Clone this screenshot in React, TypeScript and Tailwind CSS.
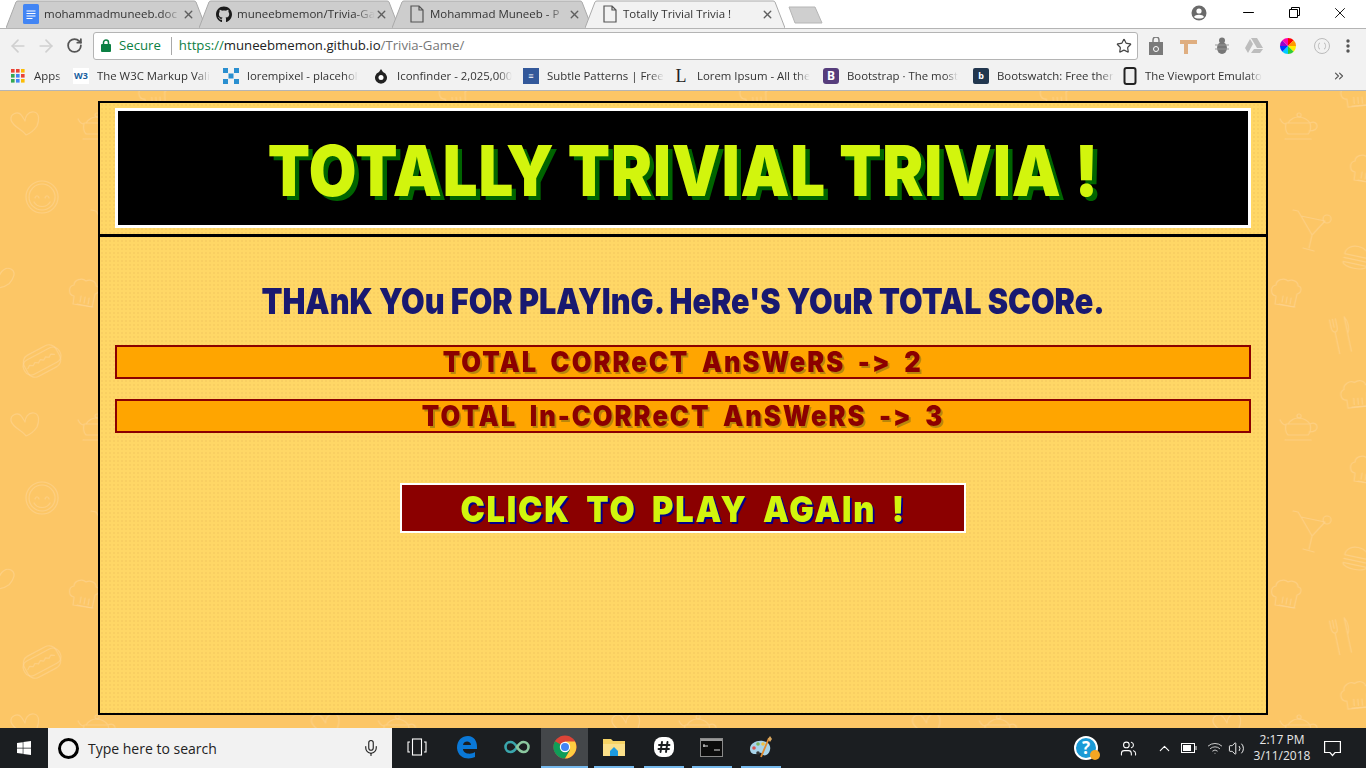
import React from "react";
import { ArrowLeft, ArrowRight, RotateCw, Star, X, Minus, ChevronUp, Users, Mic, ChevronsRight, Volume2, Wifi } from "lucide-react";
import { FaGithub, FaWindows } from "react-icons/fa";

const ui = "font-['Open_Sans','Noto_Sans',sans-serif]";
const display = "font-['Inter','Liberation_Sans',sans-serif] font-black";

const DocIcon = () => (
  <svg width="16" height="20" viewBox="0 0 16 20">
    <rect width="16" height="20" rx="1.5" fill="#4285f4" />
    <path d="M3.5 7h9M3.5 9.5h9M3.5 12h9M3.5 14.5h6" stroke="#fff" strokeWidth="1.2" />
  </svg>
);

const PageIcon = () => (
  <svg width="14" height="18" viewBox="0 0 14 18" fill="none" stroke="#555" strokeWidth="1.2">
    <path d="M1 1h8l4 4v12H1zM9 1v4h4" />
  </svg>
);

const Tab = ({ title, icon, active }: { title: string; icon: React.ReactNode; active?: boolean }) => (
  <div className="relative -mr-[7px] flex h-[28px] w-[200px] shrink-0 items-center pl-[17px] pr-[11px]" style={{ zIndex: active ? 5 : 1 }}>
    <svg className="absolute inset-0 h-full w-full" viewBox="0 0 200 28" preserveAspectRatio="none">
      <path d="M0 28 L10 2 Q10.5 1 12 1 L188 1 Q189.500 1 190 2 L200 28" fill={active ? "#f2f2f2" : "#cdcdcd"} stroke="#a9a9a9" />
    </svg>
    <div className="relative flex w-[16px] shrink-0 justify-center">{icon}</div>
    <span className={`relative ml-[5px] flex-1 whitespace-nowrap text-[11.5px] text-[#333] [mask-image:linear-gradient(to_right,black_85%,transparent)] ${ui}`}>
      {title}
    </span>
    <X size={13} strokeWidth={2.6} className="relative shrink-0 text-[#5f5f5f]" />
  </div>
);

const Mark = ({ className, children }: { className: string; children?: React.ReactNode }) => (
  <div className={`flex h-[16px] w-[16px] shrink-0 items-center justify-center text-[9px] font-bold text-white ${className}`}>{children}</div>
);

const bookmarks: { title: string; width: number; icon: React.ReactNode }[] = [
  { title: "Apps", width: 63, icon: (
    <svg width="16" height="16" viewBox="0 0 16 16">
      {["#ea4335", "#ea4335", "#fbbc05", "#34a853", "#4285f4", "#ea4335", "#34a853", "#4285f4", "#fbbc05"].map((c, i) => (
        <rect key={i} x={1 + (i % 3) * 5} y={1 + Math.floor(i / 3) * 5} width="3.6" height="3.6" fill={c} />
      ))}
    </svg>
  ) },
  { title: "The W3C Markup Vali", width: 150, icon: <Mark className="bg-white !text-[#1a5fa0]">W3</Mark> },
  { title: "lorempixel - placehol", width: 150, icon: (
    <svg width="16" height="16" viewBox="0 0 16 16" fill="#2a8fd0">
      <path d="M0 0h5v5H0zM11 0h5v5h-5zM5.500 5.500h5v5h-5zM0 11h5v5H0zM11 11h5v5h-5z" />
    </svg>
  ) },
  { title: "Iconfinder - 2,025,000", width: 150, icon: (
    <svg width="16" height="16" viewBox="0 0 16 16">
      <path d="M8 1l2 3a6 6 0 1 1-4 0z" fill="#222" />
      <circle cx="8" cy="9.500" r="2.500" fill="#fff" />
    </svg>
  ) },
  { title: "Subtle Patterns | Free", width: 150, icon: <Mark className="bg-[#33589a]">≡</Mark> },
  { title: "Lorem Ipsum - All the", width: 150, icon: <span className="w-[16px] text-center font-['Liberation_Serif',serif] text-[18px] leading-[16px] text-[#222]">L</span> },
  { title: "Bootstrap · The most", width: 150, icon: <Mark className="rounded-[3px] bg-[#563d7c] !text-[12px]">B</Mark> },
  { title: "Bootswatch: Free ther", width: 150, icon: <Mark className="rounded-[2px] bg-[#22374f]">b</Mark> },
  { title: "The Viewport Emulato", width: 150, icon: (
    <svg width="14" height="18" viewBox="0 0 14 18"><rect x="1.500" y="1" width="11" height="16" rx="2" fill="#eee" stroke="#222" strokeWidth="2" /></svg>
  ) },
];

const Doodles = () => (
  <svg className="absolute inset-0 h-full w-full" xmlns="http://www.w3.org/2000/svg">
    <defs>
      <g id="heart"><path d="M0 9C-4 3-13 1-15-6c-1-6 7-10 11-4 1 2 2 3 3 5 0-4 3-10 9-9 6 1 5 9 3 14-2 3-6 7-11 9z" /></g>
      <g id="chef">
        <path d="M-9 6C-15 5-15-4-9-5c0-5 8-8 12-4 4-2 10 0 10 5 4 0 4 7-1 8l-3 13-19-3z" />
        <path d="M-6 14l16 3M-2 6l-1 6M2 7l-1 6M6 8l-1 6" />
      </g>
      <pattern id="tile" width="300.500" height="301" patternUnits="userSpaceOnUse">
        <g fill="none" stroke="#fdd694" strokeOpacity="0.6" strokeWidth="1.200" strokeLinecap="round" strokeLinejoin="round">
          <use href="#heart" x="26" y="35" />
          <use href="#heart" x="-1" y="189" transform="rotate(20 0 189)" />
          <use href="#heart" x="299.500" y="189" transform="rotate(20 300 189)" />
          <g transform="translate(97 37)">
            <path d="M-13-5h24c1 4 1 8-2 11h-20c-3-3-3-7-2-11zM-11-5c2-4 7-6 10-6 5 0 9 2 12 6M-13-4c-3 0-5-3-6-5M11-5c4-2 7 0 7 3s-3 5-8 5M-14 11h26" />
            <circle cx="0" cy="-13" r="2" />
          </g>
          <g transform="translate(42 106)">
            <circle r="16" />
            <circle r="13" />
            <path d="M-7 1c1-3 3-3 4 0M3 1c1-3 3-3 4 0M-8 5c3 6 13 6 16 0" />
          </g>
          <g transform="translate(110 135)">
            <path d="M-11-10l24 5-13 14zM0 9l-3 13M-9 22l11 3M-11-10l-3-5-5-1" />
            <circle cx="15" cy="-7" r="4" />
          </g>
          <use href="#chef" x="83" y="199" />
          <g transform="translate(42 270) rotate(-28)">
            <rect x="-20" y="-8" width="40" height="16" rx="7" />
            <rect x="-18" y="-12" width="36" height="24" rx="8" />
            <path d="M-16 0l3-2 3 2 3-2 3 2 3-2 3 2 3-2 3 2 3-2 3 2" />
          </g>
          <g transform="translate(139 245) rotate(-12)">
            <path d="M-8-18v8c0 3 2 5 3 5v22M-5-18v8M-2-18v8c0 3-1 5-3 5M7-18c3 5 3 13 0 17v18M7-18v17" />
          </g>
          <g transform="translate(154 167) rotate(12)">
            <path d="M-12-2c0-13 24-13 24 0zM-12 2h24M-12 6c0 6 24 6 24 0z" />
          </g>
          <use href="#chef" x="152" y="0" transform="rotate(-15 152 0)" />
          <use href="#chef" x="152" y="301" transform="rotate(-15 152 301)" />
          <use href="#chef" x="162" y="75" />
        </g>
      </pattern>
    </defs>
    <rect width="100%" height="100%" fill="url(#tile)" />
  </svg>
);

const ScoreRow = ({ children }: { children: React.ReactNode }) => (
  <div className={`flex h-[34px] items-center justify-center border-2 border-[#8b0000] bg-[#ffa500] text-[28px] tracking-[2.2px] text-[#8b0000] [text-shadow:2px_2px_0_#b8860b] [word-spacing:6px] ${display}`}>
    <span className="inline-block scale-x-[0.91] whitespace-nowrap">{children}</span>
  </div>
);

const dotted = "bg-[#ffd766] bg-[radial-gradient(#f9cf62_1px,transparent_1.2px)] bg-[length:4px_4px]";

const ChromeLogo = () => (
  <svg width="24" height="24" viewBox="0 0 24 24">
    <circle cx="12" cy="12" r="11.500" fill="#db4437" />
    <path d="M12 12L2 6.200A11.500 11.500 0 0 0 12 23.500l5.700-10z" fill="#0f9d58" />
    <path d="M12 6.500h10A11.500 11.500 0 0 1 12 23.500l5-8.500z" fill="#ffcd40" />
    <circle cx="12" cy="12" r="5.200" fill="#fff" />
    <circle cx="12" cy="12" r="4" fill="#4285f4" />
  </svg>
);

const taskIcons: { width: number; active?: boolean; bar?: boolean; icon: React.ReactNode }[] = [
  { width: 50, icon: (
    <svg width="22" height="22" viewBox="0 0 22 22" fill="none" stroke="#fff" strokeWidth="1.100">
      <rect x="6.500" y="3" width="9" height="16" />
      <path d="M4 6H2v10h2M18 6h2v10h-2" />
    </svg>
  ) },
  { width: 50, icon: (
    <svg width="22" height="24" viewBox="0 0 22 24"><path d="M1 13C1 5 6 1 12 1c6 0 9 5 9 11v2H7c0 5 8 6 12 3v5c-6 3-17 2-18-9zM7 10h8c0-4-7-5-8 0z" fill="#0a78d7" /></svg>
  ) },
  { width: 49, icon: (
    <svg width="26" height="14" viewBox="0 0 26 14" fill="none" strokeWidth="2.600">
      <path d="M13 7C10 2 8 2 6.500 2a5 5 0 0 0 0 10C8 12 10 12 13 7z" stroke="#3aa6ad" />
      <path d="M13 7c3-5 5-5 6.500-5a5 5 0 0 1 0 10C18 12 16 12 13 7z" stroke="#8cc9a0" />
    </svg>
  ) },
  { width: 47, active: true, bar: true, icon: <ChromeLogo /> },
  { width: 52, bar: true, icon: (
    <svg width="24" height="22" viewBox="0 0 24 22">
      <path d="M1 3h8l2 2h12v15H1z" fill="#f6d365" />
      <path d="M1 8h22v12H1z" fill="#fbe08a" />
      <path d="M8 15l4-4 4 4v5H8z" fill="#1e9be0" />
    </svg>
  ) },
  { width: 47, bar: true, icon: (
    <svg width="22" height="22" viewBox="0 0 22 22">
      <rect x="1" y="1" width="20" height="20" rx="8" fill="#fff" />
      <path d="M9 6l-1.500 10M14.500 6L13 16M6 9h10.500M5.500 13H16" stroke="#1b1e21" strokeWidth="1.900" strokeLinecap="round" />
    </svg>
  ) },
  { width: 49, bar: true, icon: (
    <svg width="23" height="19" viewBox="0 0 23 19">
      <rect x="0.500" y="0.500" width="22" height="18" fill="#0c0c0c" stroke="#8a8a8a" />
      <rect x="1" y="1" width="21" height="2" fill="#9a9a9a" />
      <path d="M3 8h5M4 6v3M14 12h6" stroke="#ddd" />
    </svg>
  ) },
  { width: 49, bar: true, icon: (
    <svg width="24" height="24" viewBox="0 0 24 24">
      <path d="M1 14C1 8 8 5 14 6c6 1 8 5 7 9-1 5-6 7-8 4-1-3-4 1-7 0-3 0-5-2-5-5z" fill="#a8d4ea" />
      <circle cx="5" cy="13" r="1.800" fill="#d9534f" />
      <circle cx="9" cy="9" r="1.800" fill="#7bb661" />
      <circle cx="14" cy="9" r="1.800" fill="#f0c040" />
      <circle cx="9" cy="18" r="1.800" fill="#333" />
      <path d="M12 22L20 3" stroke="#e08a2e" strokeWidth="1.800" />
      <path d="M19 4l2-3 2 3-2 3z" fill="#d9a860" />
    </svg>
  ) },
];

export default function App() {
  return (
    <div className="flex h-[768px] w-[1366px] flex-col overflow-hidden bg-[#fcc666]">
      {/* chrome */}
      <header className="shrink-0 bg-white">
        <div className="relative flex h-[28px] items-end pl-[6px]">
          <Tab title="mohammadmuneeb.doc" icon={<DocIcon />} />
          <Tab title="muneebmemon/Trivia-Ga" icon={<FaGithub size={17} className="text-[#1b1b1b]" />} />
          <Tab title="Mohammad Muneeb - P" icon={<PageIcon />} />
          <Tab title="Totally Trivial Trivia !" icon={<PageIcon />} active />
          <svg className="ml-[10px] mb-[3px]" width="36" height="19" viewBox="0 0 36 19">
            <path d="M1 1h26l7 16H7z" fill="#cfcfcf" stroke="#b5b5b5" strokeLinejoin="round" />
          </svg>
          <div className="ml-auto mb-[3px] mr-[4px] flex h-[25px] items-center">
            <svg width="16" height="16" viewBox="0 0 16 16" className="mr-[18px]">
              <circle cx="8" cy="8" r="7.500" fill="#6a6a6a" />
              <circle cx="8" cy="6" r="2.600" fill="#fff" />
              <path d="M3 12c1-3 9-3 10 0-2 2-8 2-10 0z" fill="#fff" />
            </svg>
            <div className="flex w-[46px] justify-center"><Minus size={17} strokeWidth={1.500} className="text-black" /></div>
            <div className="flex w-[46px] justify-center">
              <svg width="11" height="11" viewBox="0 0 11 11" fill="none" stroke="#000"><path d="M0.500 2.500h8v8h-8zM2.500 2.500v-2h8v8h-2" /></svg>
            </div>
            <div className="flex w-[45px] justify-center"><X size={18} strokeWidth={1.200} className="text-black" /></div>
          </div>
        </div>

        <div className="flex h-[34px] items-center border-t border-[#b4b4b4] bg-[#f2f2f2] pl-[8px] pr-[16px]">
          <ArrowLeft size={20} strokeWidth={2} className="text-[#d0d0d0]" />
          <ArrowRight size={20} strokeWidth={2} className="ml-[8px] text-[#d0d0d0]" />
          <RotateCw size={17} strokeWidth={2.500} className="ml-[10px] text-[#555]" />
          <div className={`ml-[10px] flex h-[28px] w-[1045px] items-center rounded-[3px] border border-[#b4b4b4] bg-white pl-[7px] pr-[5px] text-[13.2px] ${ui}`}>
            <svg width="10" height="13" viewBox="0 0 10 13"><rect y="5" width="10" height="8" rx="1" fill="#0b8043" /><path d="M2.500 5V3.500a2.500 2.500 0 0 1 5 0V5" fill="none" stroke="#0b8043" strokeWidth="1.500" /></svg>
            <span className="ml-[8px] text-[#0b8043]">Secure</span>
            <span className="ml-[10px] h-[18px] w-px bg-[#a9a9a9]" />
            <span className="ml-[7px] text-[#0b8043]">https://</span>
            <span className="text-[#222]">muneebmemon.github.io</span>
            <span className="text-[#777]">/Trivia-Game/</span>
            <Star size={16} strokeWidth={1.800} className="ml-auto text-[#444]" />
          </div>
          <div className="ml-[10px] flex flex-1 items-center justify-between">
            <svg width="16" height="18" viewBox="0 0 16 18"><path d="M1 5h14v13H1z" fill="#7a7a7a" /><path d="M5 5V3a3 3 0 0 1 6 0v2" fill="none" stroke="#7a7a7a" strokeWidth="1.400" /><circle cx="8" cy="12" r="2.500" fill="none" stroke="#fff" /></svg>
            <svg width="18" height="16" viewBox="0 0 18 16"><path d="M0 2h17v4H8v10H4V6H0z" fill="#dfae80" /></svg>
            <svg width="14" height="18" viewBox="0 0 14 18"><ellipse cx="7" cy="11" rx="5" ry="6" fill="#777" /><circle cx="7" cy="3.500" r="3" fill="#777" /><path d="M0 8h14M0 12h14" stroke="#999" /></svg>
            <svg width="18" height="15" viewBox="0 0 18 15" fill="#bdbdbd"><path d="M6 0h6l6 10h-6zM5 1l3 5-5 9-3-5zM6 15l3-4h9l-3 4z" /></svg>
            <svg width="18" height="18" viewBox="0 0 18 18">
              {["#ff0000", "#ff9900", "#ffee00", "#33cc33", "#00ccff", "#0033ff", "#9900cc", "#ff00aa"].map((c, i) => (
                <path key={c} d="M9 9L9 1A8 8 0 0 1 14.700 3.300z" fill={c} transform={`rotate(${i * 45} 9 9)`} />
              ))}
            </svg>
            <svg width="16" height="16" viewBox="0 0 16 16" fill="none" stroke="#bbb"><circle cx="8" cy="8" r="7.500" /><path d="M6 5c-2 0-1 3-2 3 1 0 0 3 2 3M10 5c2 0 1 3 2 3-1 0 0 3-2 3" /></svg>
            <svg width="4" height="14" viewBox="0 0 4 14" fill="#555"><circle cx="2" cy="2" r="1.700" /><circle cx="2" cy="7" r="1.700" /><circle cx="2" cy="12" r="1.700" /></svg>
          </div>
        </div>

        <div className="flex h-[29px] items-center border-b border-[#b5b5b5] bg-[#f2f2f2] pl-[10px]">
          {bookmarks.map((b) => (
            <div key={b.title} className="flex shrink-0 items-center" style={{ width: b.width }}>
              {b.icon}
              <span className={`ml-[8px] whitespace-nowrap text-[11.4px] text-[#333] [mask-image:linear-gradient(to_right,black_88%,transparent)] ${ui}`}>{b.title}</span>
            </div>
          ))}
          <ChevronsRight size={14} strokeWidth={2} className="ml-auto mr-[20px] text-[#555]" />
        </div>
      </header>

      {/* page */}
      <main className="relative min-h-0 flex-1 overflow-hidden">
        <Doodles />
        <div className={`relative mx-auto mt-[10px] flex h-[614px] w-[1170px] flex-col border-2 border-black ${dotted}`}>
          <div className="h-[134px] shrink-0 border-b-[3px] border-black px-[15px] pt-[5px]">
            <div className={`flex h-[120px] items-center justify-center border-[3px] border-white bg-black pt-[5px] text-[70px] leading-none tracking-[1px] text-[#d2f50d] [text-shadow:5px_4px_0_#006400] ${display}`}>
              <span className="inline-block scale-x-[0.88] whitespace-nowrap">TOTALLY TRIVIAL TRIVIA !</span>
            </div>
          </div>
          <div className="flex flex-1 flex-col px-[15px]">
            <h2 className={`mt-[44px] text-center text-[36px] leading-[40px] text-[#191970] ${display}`}>
              <span className="inline-block scale-x-[0.85] whitespace-nowrap">THAnK YOu FOR PLAYInG. HeRe'S YOuR TOTAL SCORe.</span>
            </h2>
            <div className="mt-[24px] flex flex-col gap-[20px]">
              <ScoreRow>TOTAL CORReCT AnSWeRS -&gt; 2</ScoreRow>
              <ScoreRow>TOTAL In-CORReCT AnSWeRS -&gt; 3</ScoreRow>
            </div>
            <button className={`mx-auto mt-[50px] flex h-[50px] w-[566px] items-center justify-center border-2 border-white bg-[#8b0000] pt-[2px] text-[36px] tracking-[2px] text-[#d2f50d] [text-shadow:2px_2px_0_#00008b] [word-spacing:8px] ${display}`}>
              <span className="inline-block scale-x-[0.905] whitespace-nowrap">CLICK TO PLAY AGAIn !</span>
            </button>
          </div>
        </div>
      </main>

      {/* taskbar */}
      <footer className={`flex h-[40px] shrink-0 items-center bg-[#1b1e21] text-white ${ui}`}>
        <div className="flex h-full w-[48px] items-center justify-center"><FaWindows size={16} /></div>
        <div className="flex h-full w-[344px] items-center bg-[#f2f2f2] pl-[10px] pr-[12px] text-[#222]">
          <span className="h-[21px] w-[21px] rounded-full border-[3px] border-black" />
          <span className="ml-[9px] text-[14px]">Type here to search</span>
          <Mic size={18} strokeWidth={1.500} className="ml-auto text-[#222]" />
        </div>
        {taskIcons.map((t, i) => (
          <div key={i} className={`flex h-full shrink-0 justify-center ${t.active ? "bg-[#44474a]" : ""}`} style={{ width: t.width }}>
            <div className={`flex h-full items-center justify-center border-b-2 ${t.bar ? "border-[#76b9ed]" : "border-transparent"} ${t.active ? "w-full" : "w-[40px]"}`}>
              {t.icon}
            </div>
          </div>
        ))}
        <div className="ml-auto flex h-full items-center">
          <div className="relative mr-[22px] flex h-[24px] w-[24px] items-center justify-center rounded-full border-2 border-white bg-[#1a9ad6] text-[17px] font-bold">
            ?
            <span className="absolute -bottom-[2px] -right-[4px] h-[10px] w-[10px] rounded-full bg-[#f5a623]" />
          </div>
          <Users size={17} strokeWidth={1.500} className="mr-[19px]" />
          <ChevronUp size={17} strokeWidth={1.500} className="mr-[8px]" />
          <svg width="16" height="10" viewBox="0 0 16 10" className="mr-[10px]" fill="none" stroke="#fff"><rect x="0.500" y="0.500" width="13" height="9" /><rect x="2" y="2" width="8" height="6" fill="#fff" stroke="none" /><path d="M15 3v4" /></svg>
          <Wifi size={16} strokeWidth={1.500} className="mr-[5px] text-[#ccc]" />
          <Volume2 size={17} strokeWidth={1.300} className="mr-[5px]" />
          <div className="flex w-[64px] flex-col items-center text-[12px] leading-[16px] text-[#e8e8e8]">
            <span>2:17 PM</span>
            <span>3/11/2018</span>
          </div>
          <svg width="17" height="17" viewBox="0 0 17 17" className="ml-[10px] mr-[25px]" fill="none" stroke="#fff" strokeWidth="1.200"><path d="M0.600 1.500h15.800v11H11l-2.500 3-2.500-3H0.600z" /></svg>
        </div>
      </footer>
    </div>
  );
}
